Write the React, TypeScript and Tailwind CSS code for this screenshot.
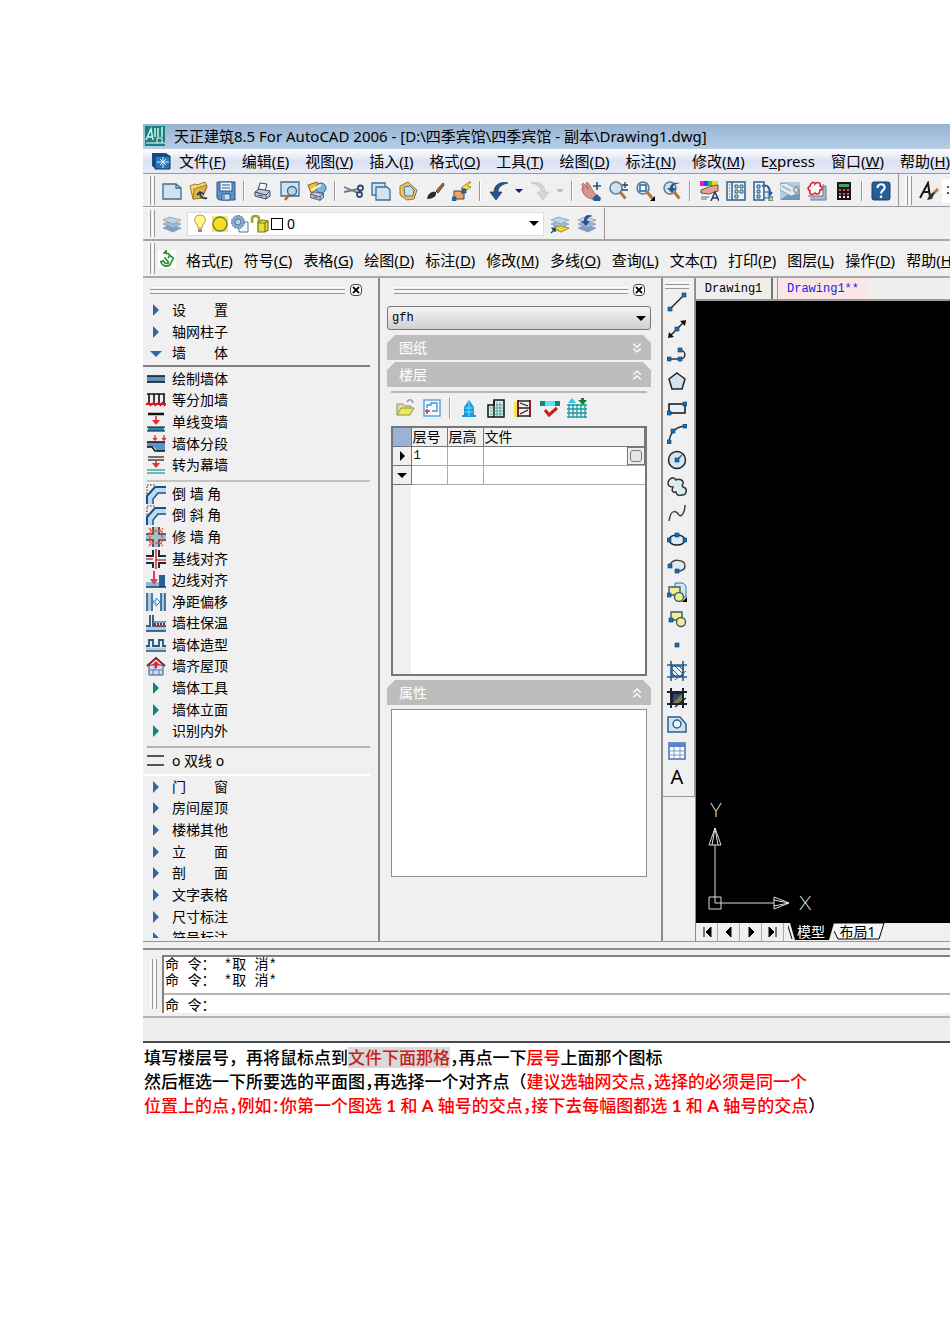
import type { ReactNode } from "react";
import { ChevronsDown, ChevronsUp } from "lucide-react";

const uiFont = "font-['Noto_Sans','Noto_Sans_CJK_SC',sans-serif]";
const monoFont = "font-['Liberation_Mono','Noto_Sans_CJK_SC',monospace]";

const menus: [string, string][] = [
  ["文件", "F"], ["编辑", "E"], ["视图", "V"], ["插入", "I"], ["格式", "O"], ["工具", "T"],
  ["绘图", "D"], ["标注", "N"], ["修改", "M"], ["Express", ""], ["窗口", "W"], ["帮助", "H"],
];

const archMenus: [string, string][] = [
  ["格式", "F"], ["符号", "C"], ["表格", "G"], ["绘图", "D"], ["标注", "D"], ["修改", "M"], ["多线", "O"],
  ["查询", "L"], ["文本", "T"], ["打印", "P"], ["图层", "L"], ["操作", "D"], ["帮助", "H"],
];

const dot = (x: number, y: number) => <rect x={x - 2} y={y - 2} width="4" height="4" fill="#1470b8" stroke="#0d3f70" strokeWidth=".6" />;

const printer = (
  <g stroke="#3c466e" fill="#c4c9de">
    <path d="M5 9 7 2l7 1-2 7z" fill="#f4f6fb" />
    <path d="m2 11 4-3 11 2v5l-4 3L2 15z" />
    <path d="m2 11 11 3 4-4M13 14v4M5 14l5 1" fill="none" />
  </g>
);
const glass = (
  <g>
    <circle cx="8" cy="7" r="6" fill="#cfe2f1" stroke="#60788f" strokeWidth="1.5" />
    <path d="m12.500 11.500 5 6" stroke="#b57636" strokeWidth="3" />
  </g>
);
const layers = (
  <g stroke="#7e93b0" strokeWidth=".7">
    <path d="m1 14 7-3 11 3-8 4z" fill="#7e9fc4" />
    <path d="m1 10 7-3 11 3-8 4z" fill="#9db8d6" />
    <path d="m1 6 7-3 11 3-8 4z" fill="#bfd3e8" />
  </g>
);
const corner = (
  <g fill="none">
    <path d="M4 20v-7l7-7h9" stroke="#b9dcec" strokeWidth="5" />
    <path d="M1 20v-8l8-9h11" stroke="#1d4f86" strokeWidth="2" />
    <path d="M7 20v-5l5-6h8" stroke="#1d4f86" strokeWidth="1.500" />
    <path d="M1 10V1h9" stroke="#222" strokeDasharray="1.500 1.500" />
  </g>
);
const shapes = (
  <g stroke="#355f6e" strokeWidth="1.400">
    <path d="M4 3h11v8H4z" fill="#f4ef94" />
    <circle cx="14" cy="13" r="4.500" fill="#f1ee93" />
    {dot(4, 11)}
  </g>
);
const triRight = (fill: string) => <path d="m7 4 6 6-6 6z" fill={fill} />;

const icons: Record<string, ReactNode> = {
  fresh: <path d="M1 3h13l5 4v11H1z M14 3v4h5" fill="#cfe3f0" stroke="#3f6d96" strokeWidth="1.300" />,
  open: (
    <g stroke="#a5772b">
      <path d="m1 5 5-2 2 1 8-3 2 5-5 11-9 1z" fill="#f6d77a" />
      <path d="m5 8 13-4-5 13-9 1z" fill="#e2b54c" />
      <path d="M18 17c-5 1-7-1-7-5m-3 2 3-3 4 2" fill="none" stroke="#263c60" strokeWidth="1.800" />
    </g>
  ),
  save: (
    <g stroke="#27578f">
      <path d="M1 1h18v18H3l-2-2z" fill="#5c94c9" />
      <path d="M4 1h12v9H4z" fill="#eef6fc" />
      <path d="M6 13h8v6H6z" fill="#d6e5f0" />
      <path d="M6 4h8M6 7h8M8 14v4" />
    </g>
  ),
  print: printer,
  preview: (
    <g>
      <path d="M1 1h18v14H1z" fill="#cde1ee" stroke="#3f6d96" strokeWidth="1.300" />
      <circle cx="12" cy="10" r="4.500" fill="#b9d6e9" stroke="#44617b" strokeWidth="1.300" />
      <path d="m9 14-4 5" stroke="#a86a35" strokeWidth="2.500" />
    </g>
  ),
  publish: (
    <g>
      <g transform="translate(2 4) scale(.85)">{printer}</g>
      <path d="m1 4 9-3 3 7-9 4z" fill="#f1bd32" stroke="#8a651c" />
      <circle cx="14" cy="7" r="5" fill="#7cb7d8" stroke="#2e648d" />
      <path d="m4 9 10-5" stroke="#eee" strokeWidth="2" />
    </g>
  ),
  cut: (
    <g fill="none" stroke="#34456c" strokeWidth="1.800">
      <path d="m0 6 14 6M0 11l14-3" stroke="#6d7a92" />
      <circle cx="16.500" cy="7" r="2.500" />
      <circle cx="15.500" cy="13.500" r="2.500" />
    </g>
  ),
  copy: (
    <g fill="#cfe3f0" stroke="#3f6d96" strokeWidth="1.300">
      <path d="M1 2h13v12H1z" />
      <path d="M5 6h11l3 3v10H5z" />
    </g>
  ),
  paste: (
    <g stroke="#9a7628">
      <path d="m2 5 8-4 9 8-3 9-7 1-7-5z" fill="#e8c45c" />
      <path d="m6 6 6-1 4 4-1 6H7z" fill="#cbe0ef" stroke="#4c7295" />
    </g>
  ),
  brush: (
    <g>
      <path d="m18 2-7 8 2 2 6-8z" fill="#9c6b3f" stroke="#5f3e22" />
      <path d="M2 18c1-6 5-8 9-7 1 4-3 7-9 7z" fill="#2b2b2e" />
    </g>
  ),
  block: (
    <g>
      <path d="M2 10h10v8H2z" fill="#f4a06b" stroke="#35485f" />
      <path d="m17 1-8 6 4 1-4 5 10-7-4-1 4-4z" fill="#fbe33f" stroke="#8e7411" strokeWidth=".8" />
      {dot(2, 18)}
      {dot(12, 10)}
    </g>
  ),
  undo: <path d="M19 2C11 0 5 4 5 11H1l6 8 6-8H9c0-5 4-8 10-9z" fill="#27548c" stroke="#15335c" strokeWidth=".7" />,
  redo: <path d="M1 2c8-2 14 2 14 9h4l-6 8-6-8h4c0-5-4-8-10-9z" fill="#d3d5d8" stroke="#bdc0c4" strokeWidth=".7" />,
  down: <path d="M6 8h8l-4 4z" fill="#15158c" />,
  downOff: <path d="M6 8h8l-4 4z" fill="#b8bcc4" />,
  pan: (
    <g>
      <path d="M1 9c-1-2 1-3 2-1L1 4c0-2 2-2 3 0l3 4-2-5c0-2 2-2 3 0l4 7 3 4-4 4C6 17 3 15 1 9z" fill="#d9958c" stroke="#96594f" strokeWidth=".8" />
      <path d="m11 18 5-5 4 4-1 3h-6z" fill="#2d5e92" />
      <path d="M16 1v8M12 5h8" stroke="#22507f" strokeWidth="1.600" />
    </g>
  ),
  zoomRt: <g>{glass}<path d="M17 1v6M14 4h6M14 9h6" stroke="#1d446f" strokeWidth="1.300" /></g>,
  zoomWin: <g>{glass}<path d="M5 4h6v6H5z" fill="#f7fbff" stroke="#2c66a1" strokeWidth="1.500" /><path d="M20 15v5h-5z" fill="#000" /></g>,
  zoomPrev: <g>{glass}<path d="M18 2C12 1 8 3 8 7H5l5 5 4-5h-3c0-3 2-4 7-5z" fill="#27548c" /></g>,
  props: (
    <g>
      <path d="M1 0h4v5H1z" fill="#e819c8" /><path d="M5 0h4v5H5z" fill="#3140e8" /><path d="M9 0h4v5H9z" fill="#1ccf62" /><path d="M13 0h6v5h-6z" fill="#f0d51f" />
      <path d="m2 9 10-4 7-1v6l-9 3-8-1z" fill="#e4a291" stroke="#7c4a42" />
      <path d="m12 20 4-9 4 9m-6-3h4" stroke="#263a63" strokeWidth="1.500" fill="none" />
      <path d="M2 16h8M2 18h6" stroke="#56719b" />
    </g>
  ),
  center: (
    <g stroke="#2f5f8f">
      <path d="M1 1h18v18H1z" fill="#eaf3f8" strokeWidth="1.500" />
      <path d="M6 1v18" strokeWidth="1.500" />
      <path d="M9 4h3v3H9zM14 4h3v3h-3zM9 9h3v3H9zM14 9h3v3h-3zM9 14h3v3H9z" fill="#cfdc8d" />
      <path d="M3 4h1M3 7h1M3 10h1M3 13h1M3 16h1" />
    </g>
  ),
  palettes: (
    <g stroke="#2f5f8f">
      <path d="M1 1h10v18H1z" fill="#eaf3f8" strokeWidth="1.500" />
      <path d="M4 4h3v3H4zM4 9h3v3H4zM4 14h3v3H4z" fill="#a8c8df" />
      <path d="M9 5c6-2 8 2 8 8m-3-2 3 3 2-3" fill="none" strokeWidth="2" />
      <path d="M11 11h5v6h-5z" fill="#cfe3f0" />
      <path d="M16 16h4v4h-4z" fill="#e7d766" />
    </g>
  ),
  sheet: (
    <g>
      <path d="M0 1h20v18H0z" fill="#b5cfe0" />
      <path d="M0 19 10 12l10-3v10z" fill="#6e97b6" />
      <path d="m0 3 6-1 7 4 6-1v7l-8 3L0 9z" fill="#e9ecee" stroke="#8ba1b1" />
      <path d="m2 5 9 5" stroke="#a3b4bf" strokeWidth="2" />
      <circle cx="16" cy="9" r="2.500" fill="#ddd" stroke="#777" />
    </g>
  ),
  markup: (
    <g>
      <path d="M5 5h14v14H3" fill="#aeb8ca" stroke="#6c7890" />
      <path d="M1 15h15V3" fill="#f5f5f7" stroke="#6c7890" />
      <path d="M4 3c2-3 4-1 4 0 3-3 6-1 5 2 3 1 3 4 0 4 0 4-3 5-5 3-3 3-6 1-5-2-3-2-2-5 1-5-1 0-1-2 0-2z" fill="#fff" stroke="#dc1f35" strokeWidth="1.600" />
    </g>
  ),
  calc: (
    <g>
      <path d="M3 1h14v18H3z" fill="#17191c" /><path d="M5 3h10v3H5z" fill="#4b9d62" />
      <path d="M5 9h2M9 9h2M13 9h2M5 13h2M9 13h2M13 13h2" stroke="#e34b4b" strokeWidth="2" />
      <path d="M5 16h2M9 16h2M13 16h2" stroke="#eee" strokeWidth="2" />
    </g>
  ),
  help: (
    <g>
      <rect x="1" y="1" width="18" height="18" rx="2" fill="#285e98" stroke="#173d69" />
      <path d="M6.500 7c0-5 8-5 7 0 0 2-3.500 2.500-3.500 5.500M10 14.500v2.500" fill="none" stroke="#fff" strokeWidth="2.200" />
    </g>
  ),
  textStyle: (
    <g fill="none">
      <path d="m1 17 8-15 2 14M4 11h6" stroke="#1b1b1b" strokeWidth="2" />
      <path d="m19 8-5 5" stroke="#b37a45" strokeWidth="3" /><path d="m16 11-3 7-5 1 3-6z" fill="#333" />
    </g>
  ),
  layers,
  layerPrev: <g>{layers}<path d="M16 2C9-1 7 3 7 7H4l5 5 4-5h-3c0-3 2-4 6-5z" fill="#27548c" /></g>,
  layerCur: <g>{layers}<path d="m4 14 5-2 10 2-8 4z" fill="#ecd734" stroke="#9b8a12" strokeWidth=".7" /><path d="m1 19 4-4m-3 0h3v3" stroke="#173d69" fill="none" strokeWidth="1.400" /></g>,
  bulb: (
    <g>
      <path d="M10 1c-5 0-7 5-4 8 1 2 2 3 2 5h4c0-2 1-3 2-5 3-3 1-8-4-8z" fill="#fff58a" stroke="#b8962f" />
      <path d="M8 15h4v3H8z" fill="#8c8c8c" />
    </g>
  ),
  sun: <g><path d="M2 2h16v16H2z" fill="#f7e96e" /><circle cx="10" cy="10" r="7" fill="#f9dd22" stroke="#607d4a" strokeWidth="1.300" /></g>,
  freeze: (
    <g stroke="#56789a">
      <path d="M9 8h9v10H9z" fill="#f3f6f9" />
      <circle cx="8" cy="8" r="6.500" fill="#86a9c6" strokeDasharray="2 1" /><circle cx="8" cy="8" r="3" fill="#b8cfdf" />
    </g>
  ),
  lock: (
    <g stroke="#77771a" strokeWidth="1.200">
      <path d="M2 9V5c0-4 7-4 7 0v9" fill="none" stroke="#a2a325" strokeWidth="2.500" />
      <path d="m8 8 4-2 6 1v9l-3 2H8z" fill="#e6e433" /><path d="M8 9h7v9M15 9l3-2" fill="none" />
    </g>
  ),
  recycle: (
    <g>
      <path d="M0 0h20v20H0z" fill="#fff" />
      <path d="M6 4 9 1v3c5-1 4 3 2 5M13 6l4 3-4 8c-4 2-8 1-10-4l3-1c1 3 4 4 6 2M7 8l5 6" fill="none" stroke="#238c35" strokeWidth="1.800" />
    </g>
  ),
  // wall commands
  wall: <g><path d="M1 7h18v6H1z" fill="#5a92c9" /><path d="M1 7h18M1 13h18" stroke="#111" strokeWidth="1.500" /></g>,
  divide: <g fill="none"><path d="M1 4h18M3 4v11M8 4v11M13 4v11M18 4v11" stroke="#111" strokeWidth="1.600" /><path d="M0 14h20M2 12l3 4M7 12l3 4M12 12l3 4M16 12l3 4" stroke="#da1626" strokeWidth="2" /></g>,
  single: <g><path d="M2 2h16" stroke="#111" strokeWidth="2.500" /><path d="M2 15h16v4H2z" fill="#1a8fc0" /><path d="M1 15h18M1 19h18" stroke="#111" /><path d="M10 4v7" stroke="#e02b3a" strokeWidth="1.600" /><path d="M6 8h8l-4 5z" fill="#e02b3a" /></g>,
  segment: <g><path d="M1 8h18v9h-8l-3-4H1z" fill="#5a92c9" /><path d="M1 8h18M1 13h5l3 4h10" fill="none" stroke="#111" strokeWidth="1.500" /><path d="M9 1v6M18 1v6M7 4l2 2 2-2m5 0 2 2 2-2" fill="none" stroke="#e02b3a" strokeWidth="1.300" /></g>,
  curtain: <g><path d="M2 2h16M2 5h16" stroke="#444" strokeWidth="1.500" /><path d="M1 15h18M1 18h18" stroke="#41a5a5" strokeWidth="1.500" /><path d="M10 5v5" stroke="#e02b3a" strokeWidth="1.600" /><path d="M6 8h8l-4 5z" fill="#e02b3a" /></g>,
  fillet: corner,
  chamfer: corner,
  trim: <g fill="none"><path d="M0 10h20M10 0v20" stroke="#a9bccb" strokeWidth="4" /><path d="M0 7h7V0M13 0v7h7M0 13h7v7M13 20v-7h7" stroke="#23334a" strokeWidth="1.600" /><path d="M4 4h12v12H4zM3 1l4 4M13 5l4-4M3 19l4-4M13 15l4 4" stroke="#e46037" strokeWidth="1.600" strokeDasharray="3 1" /></g>,
  baseline: <g fill="none"><path d="M0 7h7V1M13 1v6h7M0 14h7v5M13 19v-5h7" stroke="#1d2c40" strokeWidth="2" /><path d="M0 10h7M10 0v20M10 11h10" stroke="#d33d36" strokeWidth="1.600" /></g>,
  edge: <g><path d="M0 12h13v5H0z" fill="#8ebcd8" /><path d="M13 5h6v12h-6z" fill="#285f98" /><path d="M0 17h20" stroke="#173d69" strokeWidth="1.500" /><path d="M8 1v10" stroke="#dc3d61" strokeWidth="2" /><path d="M4 9h8l-4 6z" fill="#dc3d61" /></g>,
  offset: <g><path d="M1 1h4v18H1zM15 1h4v18h-4z" fill="#a6cfe4" /><path d="M1 1v18M6 1v18M15 1v18M19 1v18" stroke="#23527d" strokeWidth="1.500" /><path d="M7 9h3V6l4 4-4 4v-3H7z" fill="#fff" stroke="#268bd0" /></g>,
  insulate: <g><path d="M0 13h20v5H0z" fill="#a6cfe4" /><path d="M0 13h4V2M7 2v11h13M0 18h20" fill="none" stroke="#1d3c63" strokeWidth="1.600" /><path d="M8 9h12" stroke="#1d3c63" /><path d="M8 11h12" stroke="#9a1e27" strokeWidth="2" strokeDasharray="2 1" /></g>,
  mold: <g fill="none"><path d="M0 11h3V5h4v6h6V5h4v6h3" stroke="#27527c" strokeWidth="1.800" /><path d="M0 14h20" stroke="#a6cfe4" strokeWidth="3" /><path d="M0 16h20" stroke="#27527c" strokeWidth="1.500" /></g>,
  roof: <g><path d="M3 9h14v10H3z" fill="#cddcf1" stroke="#3a4f7e" /><path d="M3 14h14M9 9v5M7 14v5M13 14v5" stroke="#6078a8" /><path d="m1 10 9-8 9 8" fill="none" stroke="#7e2430" strokeWidth="2" /><path d="M10 12V8" stroke="#ef1e2f" strokeWidth="2" /><path d="M6 9h8l-4-4z" fill="#ef1e2f" /></g>,
  double: <path d="M1 5h17M1 14h17" stroke="#222" strokeWidth="1.600" />,
  closed: triRight("#33689f"),
  opened: <path d="M4 8h12l-6 6z" fill="#33689f" />,
  sub: triRight("#0d857b"),
  // draw toolbar
  line: <g><path d="M3 17 17 3" stroke="#222" strokeWidth="1.500" />{dot(3, 17)}{dot(17, 3)}</g>,
  xline: <g><path d="M3 17 17 3" stroke="#222" strokeWidth="1.500" /><path d="m1 19 1-6 5 5zM19 1l-1 6-5-5z" fill="#111" />{dot(10, 10)}</g>,
  pline: <g><path d="M2 14h11c7 0 6-9 0-9" fill="none" stroke="#333" strokeWidth="1.500" />{dot(2, 14)}{dot(13, 14)}{dot(13, 5)}</g>,
  polygon: <path d="m10 2 8 6-3 10H5L2 8z" fill="#cfe3f0" stroke="#222" strokeWidth="1.500" />,
  rect: <g><path d="M2 6h16v9H2z" fill="#e6f0f7" stroke="#111" strokeWidth="1.500" />{dot(2, 15)}{dot(18, 6)}</g>,
  arc: <g><path d="M2 18C3 9 8 3 18 2" fill="none" stroke="#333" strokeWidth="1.500" />{dot(2, 18)}{dot(6, 7)}{dot(18, 2)}</g>,
  circle: <g><circle cx="10" cy="10" r="8.500" fill="#d5e6f2" stroke="#222" strokeWidth="1.500" /><path d="m10 10 5-5" stroke="#1470b8" strokeWidth="1.500" />{dot(10, 10)}</g>,
  cloud: <path d="M3 2c2-2 5-1 6 1 3-2 8 0 7 4-1 1-1 2 0 3 5 1 4 8-1 8-3 1-6 0-6-3-3 1-5-1-3-5-6 0-6-5-3-8z" fill="#dceaf4" stroke="#333" strokeWidth="1.500" />,
  spline: <path d="M2 18C4 4 10 9 12 12c3 3 6-4 6-10" fill="none" stroke="#444" strokeWidth="1.500" />,
  ellipse: <g><ellipse cx="10" cy="10" rx="8" ry="5" fill="#dceaf4" stroke="#222" strokeWidth="1.500" />{dot(2, 10)}{dot(18, 10)}{dot(10, 5)}</g>,
  ellArc: <g><path d="M3 10c0-8 16-7 15 0 0 3-3 5-8 5" fill="#dceaf4" stroke="#444" strokeWidth="1.500" />{dot(3, 10)}{dot(10, 15)}</g>,
  insert: <g><path d="M8 1h8l3 3v11H8z" fill="#d5e6f2" stroke="#3f6d96" /><g transform="translate(-2 2)">{shapes}</g><path d="M20 15v5h-5z" fill="#000" /></g>,
  makeBlock: shapes,
  point: dot(10, 10),
  hatch: <g stroke="#2a5f90" strokeWidth="1.600"><path d="M5 5h11v10H5z" fill="#eaf3f8" /><path d="M0 4h20M0 16h20M4 0v20M16 0v20" /><path d="m5 8 8 8M5 12l4 4M8 5l8 8M12 5l4 4M8 19l11-9" strokeWidth="1" /></g>,
  gradient: <g stroke="#1c2130" strokeWidth="2"><path d="M5 5h11v11H5z" fill="#7c8048" /><path d="M6 6h9L6 15z" fill="#394770" stroke="none" /><path d="M0 4h20M0 16h20M4 0v20M16 0v20" /><path d="m8 19 11-9" strokeWidth="1.200" /></g>,
  region: <g stroke="#2f5f8f" strokeWidth="1.500"><path d="M1 3h12l6 7v8H1z" fill="#cfe3f0" /><circle cx="10" cy="10" r="4" fill="#f0f6fa" /></g>,
  table: <g><path d="M2 2h16v16H2z" fill="#fff" stroke="#4a6cb0" strokeWidth="1.500" /><path d="M2 2h16v4H2z" fill="#5881d4" /><path d="M2 10h16M2 14h16M7 6v12M13 6v12" stroke="#7b97cc" /></g>,
  // floor panel toolbar
  folder: <g stroke="#8f8f62"><path d="M2 17V6h6l2 2h6v3" fill="#e5dd9a" /><path d="m2 17 4-7h13l-4 7z" fill="#efe659" /><path d="M12 4c2-3 5-3 6 1" fill="none" stroke="#999" strokeWidth="1.500" /></g>,
  frame: <g fill="none"><path d="M2 2h16v16H2z" fill="#f4faff" stroke="#5aa4e6" strokeWidth="1.500" /><path d="M5 10V7h4V5h6v8h-5" stroke="#4c8dc6" strokeWidth="1.300" /><path d="M3 13h5M5 11v5" stroke="#e02b3a" strokeWidth="1.500" /></g>,
  tower: <g><path d="M5 18V9l5-7 5 7v9z" fill="#189ce0" /><path d="M3 18h14" stroke="#189ce0" strokeWidth="2" /><path d="M10 4v14M6 10h8M6 14h8" stroke="#8ed8fa" /></g>,
  city: <g><path d="M2 19V7h6V2h10v17z" fill="#d3efec" stroke="#111" strokeWidth="1.500" /><path d="M8 3v16" stroke="#111" strokeWidth="1.500" /><path d="M11 4v14M14 4v14M4 10h13M4 13h13M4 16h13M10 7h7" stroke="#4d938c" strokeWidth=".8" /></g>,
  ladder: <g><path d="M1 4h4v15H1z" fill="#f2ea48" /><path d="M5 2v17M17 2v17" stroke="#8f1b28" strokeWidth="2" /><path d="M5 3h12M5 10h12M5 18h12M7 5l8 3M15 12l-8 4" fill="none" stroke="#222" strokeWidth="1.300" /></g>,
  check: <g><path d="M0 3h20v5H0z" fill="#138580" /><path d="M5 3h10v5H5z" fill="#64e0e4" /><path d="m5 12 4 5 8-7" fill="none" stroke="#c3211a" strokeWidth="3" /></g>,
  gridUp: <g><path d="M0 7h20M0 11h20M0 15h20M0 19h20M2 6v14M6 6v14M10 6v14M14 6v14M18 6v14" stroke="#1a9ca5" strokeWidth="1.300" /><path d="m5 0 4 5H1z" fill="#29c8ea" /><path d="M14 0h3v2h3l-4 5-5-5h3z" fill="#168032" /></g>,
};

function Icon({ name, size = "size-5" }: { name: string; size?: string }) {
  return <svg viewBox="0 0 20 20" className={`${size} shrink-0`} aria-hidden="true">{icons[name]}</svg>;
}

function Tool({ name }: { name: string }) {
  if (name === "|") return <span className="mx-1 h-5 w-[2px] shrink-0 border-l border-[#999] bg-white" />;
  const arrow = name === "down" || name === "downOff";
  return (
    <button type="button" aria-label={name} className={`flex h-6 shrink-0 items-center justify-center ${arrow ? "w-[14px]" : "w-[27px]"}`}>
      <Icon name={name} />
    </button>
  );
}

function VGrip() {
  return (
    <span className="mr-[3px] flex shrink-0 gap-px self-stretch">
      <i className="w-[3px] border-r border-l border-r-[#999] border-l-white bg-[#f0f0f0]" />
      <i className="w-[3px] border-r border-l border-r-[#999] border-l-white bg-[#f0f0f0]" />
    </span>
  );
}

function HGrip() {
  return (
    <span className="flex flex-1 flex-col gap-px">
      <i className="h-[3px] border-t border-b border-t-white border-b-[#999]" />
      <i className="h-[3px] border-t border-b border-t-white border-b-[#999]" />
    </span>
  );
}

function PanelTop() {
  return (
    <div className="flex h-6 shrink-0 items-center gap-[5px] pr-4 pl-[7px]">
      <HGrip />
      <button type="button" aria-label="关闭" className="flex size-3 items-center justify-center rounded-sm border border-[#444] bg-white">
        <svg viewBox="0 0 8 8" className="size-2"><path d="m1 1 6 6M7 1 1 7" stroke="#000" strokeWidth="1.800" /></svg>
      </button>
    </div>
  );
}

function MenuLabel({ text, hot }: { text: string; hot: string }) {
  if (!hot) return <>E<u>x</u>press</>;
  return <>{text}(<u>{hot}</u>)</>;
}

function CommandGroup({ items, className }: { items: [string, string][]; className: string }) {
  return (
    <ul className={`flex shrink-0 flex-col ${className}`}>
      {items.map(([icon, label]) => (
        <li key={label} className="min-h-0 flex-1">
          <button type="button" className="flex h-full items-center gap-[6px] pl-[3px] whitespace-pre">
            <Icon name={icon} />
            {label}
          </button>
        </li>
      ))}
    </ul>
  );
}

function Section({ title, open }: { title: string; open?: boolean }) {
  const Chevron = open ? ChevronsUp : ChevronsDown;
  return (
    <button
      type="button"
      className="flex h-[25px] w-full shrink-0 items-center justify-between bg-[#bdbdbd] pr-[6px] pl-3 text-sm text-white [clip-path:polygon(0_8px,8px_0,calc(100%-8px)_0,100%_8px,100%_100%,0_100%)]"
    >
      {title}
      <Chevron className="size-4" />
    </button>
  );
}

const standardTools = [
  "fresh", "open", "save", "|", "print", "preview", "publish", "|", "cut", "copy", "paste", "brush", "block", "|",
  "undo", "down", "redo", "downOff", "|", "pan", "zoomRt", "zoomWin", "zoomPrev", "|",
  "props", "center", "palettes", "sheet", "markup", "calc", "|", "help",
];

const drawTools = [
  "line", "xline", "pline", "polygon", "rect", "arc", "circle", "cloud", "spline", "ellipse",
  "ellArc", "insert", "makeBlock", "point", "hatch", "gradient", "region", "table",
];

const topGroup: [string, string][] = [["closed", "设　　置"], ["closed", "轴网柱子"], ["opened", "墙　　体"]];
const wallGroup: [string, string][] = [
  ["wall", "绘制墙体"], ["divide", "等分加墙"], ["single", "单线变墙"], ["segment", "墙体分段"], ["curtain", "转为幕墙"],
];
const editGroup: [string, string][] = [
  ["fillet", "倒 墙 角"], ["chamfer", "倒 斜 角"], ["trim", "修 墙 角"], ["baseline", "基线对齐"], ["edge", "边线对齐"],
  ["offset", "净距偏移"], ["insulate", "墙柱保温"], ["mold", "墙体造型"], ["roof", "墙齐屋顶"],
  ["sub", "墙体工具"], ["sub", "墙体立面"], ["sub", "识别内外"],
];
const restGroup: [string, string][] = [
  ["closed", "门　　窗"], ["closed", "房间屋顶"], ["closed", "楼梯其他"], ["closed", "立　　面"],
  ["closed", "剖　　面"], ["closed", "文字表格"], ["closed", "尺寸标注"], ["closed", "符号标注"],
];

function Toolbars() {
  return (
    <>
      <div className="flex h-[34px] border-t border-[#999]">
        <div className="flex shrink-0 items-center border-r border-b border-[#999] pt-[2px] pr-[4px] pb-px pl-[5px]">
          <VGrip />
          {standardTools.map((t, i) => <Tool key={i} name={t} />)}
        </div>
        <div className="flex flex-1 items-center border-b border-[#999] pt-[2px] pb-px pl-[6px]">
          <VGrip />
          <Tool name="textStyle" />
          <span className="h-6 flex-1 bg-white pl-1 text-sm">:</span>
        </div>
      </div>
      <div className="flex h-[34px] border-b-2 border-[#a8a8a8]">
        <div className="flex shrink-0 items-center border-t border-r border-t-white border-r-[#999] py-[2px] pr-[4px] pl-[5px]">
          <VGrip />
          <Tool name="layers" />
          <div className="relative mx-[2px] flex h-6 w-[357px] items-center border border-[#ddd] bg-white pl-[2px]">
            {["bulb", "sun", "freeze", "lock"].map((n) => <Icon key={n} name={n} />)}
            <span className="ml-px size-3 border border-black bg-white" />
            <select aria-label="图层" className="h-full flex-1 appearance-none pl-1 text-sm outline-none">
              <option>0</option>
            </select>
            <svg viewBox="0 0 10 5" className="pointer-events-none absolute right-1 h-[5px] w-[10px]"><path d="M0 0h10L5 5z" /></svg>
          </div>
          <Tool name="layerCur" />
          <Tool name="layerPrev" />
        </div>
      </div>
      <div className="flex h-[37px] items-center border-b-2 border-[#a8a8a8] py-[2px] pl-[5px] text-[15px]">
        <VGrip />
        <Icon name="recycle" size="size-[18px]" />
        <nav className="ml-[10px] flex gap-[11px] pt-[3px] whitespace-nowrap">
          {archMenus.map(([text, hot]) => (
            <button type="button" key={text + hot} className="shrink-0"><MenuLabel text={text} hot={hot} /></button>
          ))}
        </nav>
      </div>
    </>
  );
}

function CommandPanel() {
  return (
    <aside className="flex w-[237px] shrink-0 flex-col overflow-hidden border-r-2 border-[#8a8a8a] pb-[3px] text-sm leading-5">
      <PanelTop />
      <div className="flex min-h-0 flex-1 flex-col overflow-hidden">
        <CommandGroup items={topGroup} className="-mt-[3px] h-[65px]" />
        <hr className="mt-px mr-2 border-t-2 border-[#808080]" />
        <CommandGroup items={wallGroup} className="mt-px h-[108px]" />
        <hr className="mt-1 mr-2 ml-1 border-t-2 border-[#c4c4c4]" />
        <CommandGroup items={editGroup} className="mt-px h-[259px]" />
        <hr className="mt-1 mr-2 ml-1 border-t-2 border-[#b4b4b4]" />
        <CommandGroup items={[["double", "o 双线 o"]]} className="mt-[2px] h-[22px]" />
        <hr className="mt-[2px] mr-2 border-t-2 border-white" />
        <CommandGroup items={restGroup} className="h-[173px]" />
      </div>
    </aside>
  );
}

function FloorPanel() {
  return (
    <section className="w-[283px] shrink-0 border-r-2 border-[#8a8a8a] pr-[10px] pl-[7px]">
      <div className="-mr-[10px]"><PanelTop /></div>
      <div className={`relative mt-1 ${monoFont}`}>
        <select aria-label="工程" className="block h-6 w-full appearance-none rounded-[3px] border border-[#777] bg-linear-to-b from-[#f4f4f4] to-[#d0d0d0] pl-1 text-xs">
          <option>gfh</option>
        </select>
        <svg viewBox="0 0 10 5" className="pointer-events-none absolute top-[10px] right-[5px] h-[5px] w-[10px]"><path d="M0 0h10L5 5z" /></svg>
      </div>
      <div className="mt-[5px] flex flex-col gap-[2px]">
        <Section title="图纸" />
        <Section title="楼层" open />
      </div>
      <div className="mx-1 mt-1 flex h-[35px] items-center border-t-2 border-[#b8b8b8] pb-1">
        {["folder", "frame", "|", "tower", "city", "ladder", "check", "gridUp"].map((n) => <Tool key={n} name={n} />)}
      </div>
      <div className="mx-1 flex h-[250px] flex-col border-2 border-[#777] bg-white">
        <table className={`w-full table-fixed border-collapse ${uiFont} text-sm`}>
          <colgroup>
            <col className="w-[18px]" />
            <col className="w-9" />
            <col className="w-9" />
            <col />
          </colgroup>
          <thead>
            <tr className="h-[18px] bg-[#f0f0f0] text-left leading-4">
              <th className="border-r border-b border-[#777] bg-[#9ab3d3]" />
              {["层号", "层高", "文件"].map((h) => (
                <th key={h} scope="col" className="border-r border-b border-[#777] px-px pt-px font-normal">{h}</th>
              ))}
            </tr>
          </thead>
          <tbody>
            {["1", ""].map((floor, i) => (
              <tr key={i} className="h-[19px] leading-4">
                <td className="border-r border-b border-[#777] bg-[#f0f0f0]">
                  <svg viewBox="0 0 10 10" className="mx-auto size-[10px]"><path d={i ? "M0 3h10L5 8z" : "m3 0 5 5-5 5z"} /></svg>
                </td>
                <td className={`border-r border-b border-[#aaa] px-[2px] text-xs ${monoFont}`}>{floor}</td>
                <td className="border-r border-b border-[#aaa]" />
                <td className="border-b border-[#aaa]">
                  {floor && (
                    <button type="button" aria-label="选择文件" className="ml-auto flex size-[18px] items-center justify-center border border-[#777] bg-[#eee]">
                      <i className="size-3 rounded-[3px] border border-[#777] bg-[#e6e6e6]" />
                    </button>
                  )}
                </td>
              </tr>
            ))}
          </tbody>
        </table>
        <div className="w-[18px] flex-1 bg-[#f0f0f0]" />
      </div>
      <div className="mt-1"><Section title="属性" open /></div>
      <div className="mx-1 mt-1 h-[168px] border border-[#8c9097] bg-white" />
    </section>
  );
}

function DrawingArea() {
  return (
    <main className="flex min-w-0 flex-1 flex-col border-l border-[#8a8a8a]">
      <div className={`flex h-[23px] border-b-2 border-[#999] bg-[#f0eded] text-xs ${monoFont}`}>
        <button type="button" className="w-[77px] border-r-2 border-[#777]">Drawing1</button>
        <button type="button" className="ml-1 w-[91px] border-l border-[#999] bg-[#fbe6e6] text-[#2020e8]">Drawing1**</button>
      </div>
      <div className="relative flex-1 bg-black">
        <svg viewBox="0 0 130 130" className="absolute bottom-0 left-0 size-[130px]" fill="none" stroke="#ddd">
          <path d="M13 104h12v12H13zM19 110V52M19 110h59M13 52l6-17 6 17zM16 52l3-17 3 17M78 104l15 6-15 6zM78 107l15 3-15 3" />
          <text x="103" y="117" fill="#ddd" stroke="none" className="font-['Lato'] text-xl font-light">X</text>
          <text x="14" y="24" fill="#ddd" stroke="none" className="font-['Lato'] text-xl font-light">Y</text>
        </svg>
      </div>
      <div className="flex h-[18px] bg-[#f0f0f0] text-sm leading-4">
        {["M2 0v10M9 0 4 5l5 5z", "m7 0-5 5 5 5z", "m3 0 5 5-5 5z", "m1 0 5 5-5 5zM8 0v10"].map((d) => (
          <button type="button" key={d} aria-label="切换布局" className="flex w-[22px] items-center justify-center border-r border-[#aaa]">
            <svg viewBox="0 0 10 10" className="size-[10px]" stroke="#000"><path d={d} /></svg>
          </button>
        ))}
        <button type="button" className="relative ml-1 w-[46px] text-white">
          <svg viewBox="0 0 46 17" className="absolute inset-0 h-[17px] w-[46px]"><path d="M2 0h44l-5 17H7z" /><path d="m-1 0 5 16" stroke="#000" /></svg>
          <span className="relative">模型</span>
        </button>
        <button type="button" className="relative w-[51px] pr-1">
          <svg viewBox="0 0 51 17" className="absolute inset-0 h-[17px] w-[51px]"><path d="M0 0h50l-5 16H4L0 8" fill="#f6f6f6" stroke="#000" /></svg>
          <span className="relative">布局1</span>
        </button>
      </div>
    </main>
  );
}

export default function App() {
  return (
    <div className="min-h-screen overflow-x-hidden bg-white pt-[124px] pl-[143px] text-black">
      <div className={`overflow-hidden bg-[#f0f0f0] ${uiFont}`}>
        <header className="flex h-[25px] items-center bg-linear-to-b from-[#98b3d0] to-[#b6cee8] pb-px pl-[2px] text-[15px] leading-5 whitespace-nowrap">
          <svg viewBox="0 0 20 20" className="size-5 shrink-0">
            <path d="M0 0h20v20H0z" fill="#16837f" />
            <path d="M1 14 6 3l2 11M3 11h4M10 2v9M13 2v9M17 1v10" fill="none" stroke="#d7f4ef" strokeWidth="1.500" />
            <path d="M12 12h5v5h-5zM1 17h11M17 17h3" fill="none" stroke="#fff" />
          </svg>
          <h1 className="ml-[9px]">天正建筑8.5 For AutoCAD 2006 - [D:\四季宾馆\四季宾馆 - 副本\Drawing1.dwg]</h1>
        </header>
        <div className="flex h-6 items-center bg-linear-to-b from-white via-[#dce2f3] to-[#e6eaf6] pl-2 text-[15px] whitespace-nowrap">
          <svg viewBox="0 0 20 20" className="size-5 shrink-0">
            <path d="M1 2h14l4 3v13H5l-4-3z" fill="#174d80" />
            <path d="M4 5h15v13H4z" fill="#2878b6" stroke="#12375d" />
            <path d="M6 11h12M12 6v11M9 8l6 6M15 8l-6 6" stroke="#d6f1ff" />
          </svg>
          <nav className="ml-2 flex gap-4">
            {menus.map(([text, hot]) => (
              <button type="button" key={text} className="shrink-0"><MenuLabel text={text} hot={hot} /></button>
            ))}
          </nav>
        </div>
        <Toolbars />
        <div className="flex h-[664px] border-b border-[#999]">
          <CommandPanel />
          <FloorPanel />
          <div className="flex w-8 shrink-0 flex-col items-center self-start border-r border-b border-[#999] pt-1 pr-[3px] pb-[6px]">
            <div className="flex w-6"><HGrip /></div>
            <div className="flex h-[501px] flex-col">
              {drawTools.map((n) => (
                <button type="button" key={n} aria-label={n} className="flex min-h-0 flex-1 items-center"><Icon name={n} /></button>
              ))}
              <button type="button" className="min-h-0 flex-1 text-xl leading-6">A</button>
            </div>
          </div>
          <DrawingArea />
        </div>
        <footer>
          <div className="mt-[6px] flex border-t-2 border-[#8a8a8a] pt-[5px] pl-[7px]">
            <div className="flex py-1"><VGrip /></div>
            <div className={`ml-[2px] flex-1 border-t-2 border-l-2 border-[#808080] bg-white text-sm leading-4 ${monoFont}`}>
              <p className="pl-px whitespace-pre">命 令： *取 消*</p>
              <p className="pl-px whitespace-pre">命 令： *取 消*</p>
              <label className="mt-1 flex h-5 items-center border-t-2 border-[#b5b5b5] pt-[3px] pl-px whitespace-pre">
                命 令：
                <input type="text" className="h-4 min-w-0 flex-1 outline-none" />
              </label>
            </div>
          </div>
          <div className="mt-[3px] h-[27px] border-t-2 border-b-2 border-t-[#b5b5b5] border-b-[#454b55] bg-[#f0eded]" />
        </footer>
      </div>
      <article className="mt-[3px] pl-px font-['Lato','Noto_Sans_CJK_SC',sans-serif] text-[17px] leading-6 font-medium whitespace-nowrap">
        <p>
          填写楼层号，再将鼠标点到<span className="bg-[#d9d9d9] text-[#c81e1e]">文件下面那格</span>
          <span className="[font-feature-settings:'halt']">，再点一下<span className="text-[#f00]">层号</span>上面那个图标</span>
        </p>
        <p>
          <span className="[font-feature-settings:'halt']">然后框选一下所要选的平面图，再选择一个对齐点</span>（<span className="text-[#f00] [font-feature-settings:'halt']">建议选轴网交点，选择的必须是同一个</span>
        </p>
        <p className="[font-feature-settings:'halt']">
          <span className="text-[#f00]">位置上的点，例如：你第一个图选 <b>1</b> 和 <b>A</b> 轴号的交点，接下去每幅图都选 <b>1</b> 和 <b>A</b> 轴号的交点</span>）
        </p>
      </article>
    </div>
  );
}
